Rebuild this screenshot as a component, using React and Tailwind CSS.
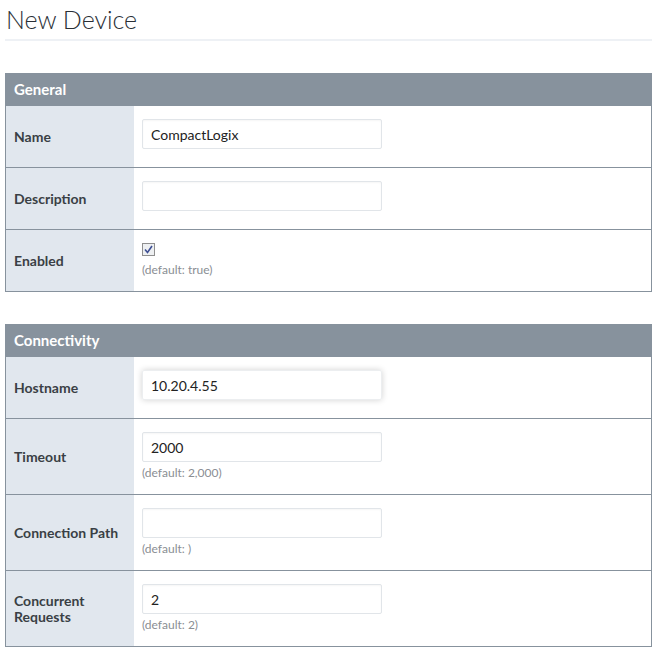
import React from "react";

const Field = ({ value, focused }) => (
  <input
    type="text"
    defaultValue={value}
    className={
      "block w-[240px] h-[30px] px-[8px] text-[14px] text-[#222] rounded-[2px] border outline-none " +
      (focused
        ? "border-[#eceef0] shadow-[0_0_6px_rgba(0,0,0,0.18)]"
        : "border-[#e1e5e9] shadow-[inset_0_1px_2px_rgba(0,0,0,0.04)]")
    }
  />
);

const Help = ({ children }) => (
  <div className="mt-[4px] text-[12px] leading-[14px] text-[#8a8e93]">{children}</div>
);

const Row = ({ label, children }) => (
  <div className="flex border-t border-[#87929d] min-h-[62px]">
    <div className="w-[128px] shrink-0 bg-[#e1e7ee] flex items-center px-[8px] text-[14px] font-bold leading-[16px] text-[#3a3f45]">
      {label}
    </div>
    <div className="flex-1 flex flex-col px-[8px] pt-[13px] pb-[14px]">{children}</div>
  </div>
);

const Section = ({ title, children }) => (
  <section className="border border-[#87929d] border-t-0">
    <div className="bg-[#87929d] h-[32px] flex items-center px-[8px] text-[15px] font-bold text-white">
      {title}
    </div>
    {children}
  </section>
);

export default function App() {
  return (
    <div className="bg-white min-h-[657px] px-[5px] pt-[4px] font-['Lato','Liberation_Sans',sans-serif]">
      <h1 className="text-[25px] font-light leading-[30px] text-[#2a2f36] pl-[1px]">New Device</h1>
      <div className="mt-[5px] h-[2px] bg-[#eef1f5] w-[647px]" />

      <div className="mt-[32px] w-[647px] flex flex-col gap-[32px]">
        <Section title="General">
          <Row label="Name">
            <Field value="CompactLogix" />
          </Row>
          <Row label="Description">
            <Field value="" />
          </Row>
          <Row label="Enabled">
            <span className="w-[13px] h-[13px] border border-[#8f8f8f] bg-[#eef0f2] flex items-center justify-center">
              <svg width="9" height="9" viewBox="0 0 9 9">
                <path d="M1 4.5 L3.5 7.5 L8 1" fill="none" stroke="#3e4f94" strokeWidth="1.6" />
              </svg>
            </span>
            <Help>
              <span className="block mt-[3px]">(default: true)</span>
            </Help>
          </Row>
        </Section>

        <Section title="Connectivity">
          <Row label="Hostname">
            <Field value="10.20.4.55" focused />
          </Row>
          <Row label="Timeout">
            <Field value="2000" />
            <Help>(default: 2,000)</Help>
          </Row>
          <Row label="Connection Path">
            <Field value="" />
            <Help>(default: )</Help>
          </Row>
          <Row label={<span>Concurrent<br />Requests</span>}>
            <Field value="2" />
            <Help>(default: 2)</Help>
          </Row>
        </Section>
      </div>
    </div>
  );
}
